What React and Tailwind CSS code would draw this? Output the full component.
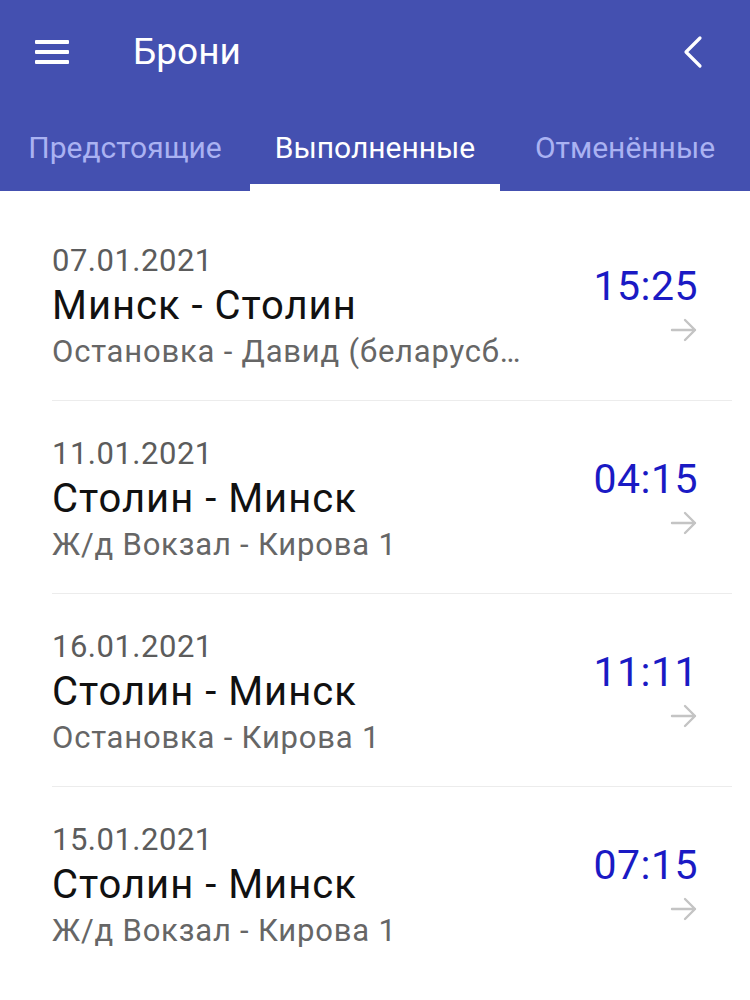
import React, { useState } from 'react';

const bookings = [
    { date: '07.01.2021', route: 'Минск - Столин', stop: 'Остановка - Давид (беларусбанк)', time: '15:25' },
    { date: '11.01.2021', route: 'Столин - Минск', stop: 'Ж/д Вокзал - Кирова 1', time: '04:15' },
    { date: '16.01.2021', route: 'Столин - Минск', stop: 'Остановка - Кирова 1', time: '11:11' },
    { date: '15.01.2021', route: 'Столин - Минск', stop: 'Ж/д Вокзал - Кирова 1', time: '07:15' },
];

const tabs = ['Предстоящие', 'Выполненные', 'Отменённые'];

function MenuIcon() {
    return (
        <svg width="34" height="24" viewBox="0 0 34 24" fill="none">
            <rect x="0" y="0" width="34" height="4" rx="1" fill="white" />
            <rect x="0" y="10" width="34" height="4" rx="1" fill="white" />
            <rect x="0" y="20" width="34" height="4" rx="1" fill="white" />
        </svg>
    );
}

function BackIcon() {
    return (
        <svg width="24" height="34" viewBox="0 0 24 34" fill="none">
            <path d="M19 3 L5 17 L19 31" stroke="white" strokeWidth="3.2" strokeLinecap="round" strokeLinejoin="round" />
        </svg>
    );
}

function ArrowIcon() {
    return (
        <svg width="28" height="24" viewBox="0 0 28 24" fill="none">
            <path d="M2 12 H25 M15 2 L25 12 L15 22" stroke="#c4c4c4" strokeWidth="2.4" strokeLinecap="round" strokeLinejoin="round" />
        </svg>
    );
}

function BookingRow({ booking, last }) {
    return (
        <div>
            <div className="flex items-start pl-[52px] pr-[52px] pt-[32px] pb-[26px]">
                <div className="flex-1 min-w-0 pr-6">
                    <div className="text-[31px] leading-[42px] tracking-[0.5px] text-[#5c5c5c]">{booking.date}</div>
                    <div className="text-[40px] leading-[48px] tracking-[1px] text-[#111111]">{booking.route}</div>
                    <div className="text-[31px] leading-[44px] tracking-[0.8px] text-[#666666] truncate max-w-[478px]">{booking.stop}</div>
                </div>
                <div className="flex flex-col items-end pt-[22px]">
                    <div className="text-[41px] leading-[48px] tracking-[0.5px] text-[#1a1ac4]">{booking.time}</div>
                    <div className="mt-[8px]">
                        <ArrowIcon />
                    </div>
                </div>
            </div>
            {!last && <div className="ml-[52px] mr-[18px] h-px bg-[#ececec]" />}
        </div>
    );
}

export default function App() {
    const [activeTab, setActiveTab] = useState(1);

    return (
        <div className="w-[750px] h-[1000px] bg-white overflow-hidden font-['Roboto',sans-serif]">
            <div className="bg-[#4450b0]">
                <div className="h-[104px] flex items-center pl-[35px] pr-[45px]">
                    <MenuIcon />
                    <h1 className="ml-[64px] text-[37px] text-white font-normal">Брони</h1>
                    <div className="ml-auto">
                        <BackIcon />
                    </div>
                </div>
                <div className="flex h-[87px]">
                    {tabs.map((tab, i) => (
                        <button
                            key={tab}
                            onClick={() => setActiveTab(i)}
                            className="flex-1 relative flex items-center justify-center"
                        >
                            <span className={`text-[30px] ${activeTab === i ? 'text-white' : 'text-[#aab2f2]'}`}>
                                {tab}
                            </span>
                            {activeTab === i && (
                                <span className="absolute left-0 right-0 bottom-0 h-[7px] bg-white" />
                            )}
                        </button>
                    ))}
                </div>
            </div>
            <div className="pt-[17px]">
                {bookings.map((b, i) => (
                    <BookingRow key={i} booking={b} last={i === bookings.length - 1} />
                ))}
            </div>
        </div>
    );
}
